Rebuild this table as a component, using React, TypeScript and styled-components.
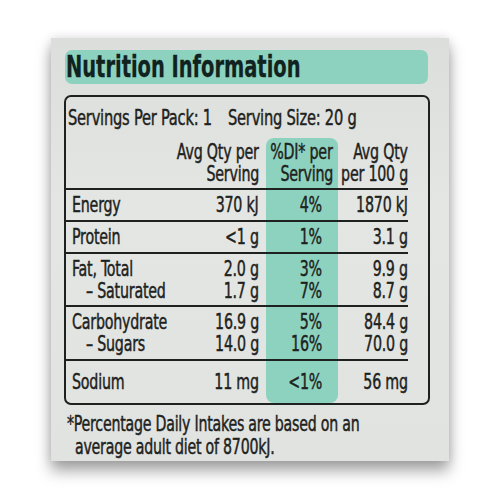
import React from "react";
import styled, { createGlobalStyle } from "styled-components";

const Global = createGlobalStyle`
  html, body { margin: 0; padding: 0; background: #ffffff; }
  body { width: 500px; height: 500px; overflow: hidden; }
`;

const FONT = `"DejaVu Sans Condensed", "Liberation Sans", sans-serif`;
const INK = "#1d2220";
const TEAL = "#8dd2bf";

const Page = styled.div`
  padding: 38px 0 0 51px;
`;

const Card = styled.div`
  width: 398px;
  height: 423px;
  box-sizing: border-box;
  padding: 12px 19px 0 13px;
  background: linear-gradient(180deg, #dcdedb 0%, #e4e6e3 40%, #e1e3e0 100%);
  box-shadow: 0 10px 14px rgba(0, 0, 0, 0.35), 0 0 10px rgba(0, 0, 0, 0.12);
  display: flex;
  flex-direction: column;
  font-family: ${FONT};
  color: ${INK};
  -webkit-text-stroke: 0.45px ${INK};
`;

/* condensed text: the label's face is a narrow DIN-like type */
const T = styled.span<{ $o?: "left" | "right"; $k?: number }>`
  display: inline-block;
  white-space: nowrap;
  transform: scaleX(${(p) => p.$k ?? 0.72});
  transform-origin: ${(p) => p.$o ?? "left"} center;
`;

const TitleBar = styled.div`
  height: 34px;
  margin: 0 2px 11px 1px;
  background: ${TEAL};
  border-radius: 7px;
  display: flex;
  align-items: center;
  padding-left: 1px;
`;

const Title = styled.h1`
  margin: 0;
  font-size: 30px;
  font-weight: 700;
  color: #10231e;
  -webkit-text-stroke: 0.3px #10231e;
  line-height: 1;
`;

const TableBox = styled.div`
  border: 2px solid ${INK};
  border-radius: 7px;
  padding-right: 20px;
  display: flex;
  flex-direction: column;
`;

const ServingLine = styled.div`
  height: 41px;
  display: grid;
  grid-template-columns: 160px 1fr;
  align-items: center;
  padding-left: 2px;
  font-size: 22px;
  letter-spacing: -0.3px;
`;

const Row = styled.div<{ $top?: boolean }>`
  display: grid;
  grid-template-columns: minmax(0, 1fr) 91px 72px 70px;
  border-top: ${(p) => (p.$top ? `2px solid ${INK}` : "none")};
  font-size: 22px;
  letter-spacing: -0.3px;
  line-height: 22px;
`;

const Cell = styled.div<{ $h: number }>`
  height: ${(p) => p.$h}px;
  min-width: 0;
  display: flex;
  flex-direction: column;
  justify-content: center;
`;

const Label = styled(Cell)`
  padding-left: 6px;
  align-items: flex-start;
`;

const Num = styled(Cell)<{ $pr?: number }>`
  align-items: flex-end;
  padding-right: ${(p) => p.$pr ?? 0}px;
`;

const DiCell = styled(Num)<{ $round?: "top" | "bottom" }>`
  background: ${TEAL};
  border-radius: ${(p) =>
    p.$round === "top" ? "8px 8px 0 0" : p.$round === "bottom" ? "0 0 8px 8px" : "0"};
`;

const RightLine = styled.div`
  display: flex;
  justify-content: flex-end;
`;

const Sub = styled.div`
  padding-left: 14px;
`;

const Footer = styled.div`
  margin: 8px 0 0 3px;
  font-size: 21px;
  letter-spacing: -0.3px;
  line-height: 23px;
`;

const FootLine = styled.div<{ $indent?: number }>`
  padding-left: ${(p) => p.$indent ?? 0}px;
`;

type R = { label: string[]; a: string[]; b: string[]; c: string[]; h: number };

const rows: R[] = [
  { label: ["Energy"], a: ["370 kJ"], b: ["4%"], c: ["1870 kJ"], h: 30 },
  { label: ["Protein"], a: ["<1 g"], b: ["1%"], c: ["3.1 g"], h: 30 },
  {
    label: ["Fat, Total", "– Saturated"],
    a: ["2.0 g", "1.7 g"],
    b: ["3%", "7%"],
    c: ["9.9 g", "8.7 g"],
    h: 51,
  },
  {
    label: ["Carbohydrate", "– Sugars"],
    a: ["16.9 g", "14.0 g"],
    b: ["5%", "16%"],
    c: ["84.4 g", "70.0 g"],
    h: 52,
  },
  { label: ["Sodium"], a: ["11 mg"], b: ["<1%"], c: ["56 mg"], h: 42 },
];

const right = (xs: string[]) =>
  xs.map((x, i) => (
    <RightLine key={i}>
      <T $o="right">{x}</T>
    </RightLine>
  ));

const labels = (xs: string[]) =>
  xs.map((x, i) =>
    i === 0 ? (
      <div key={i}>
        <T>{x}</T>
      </div>
    ) : (
      <Sub key={i}>
        <T>{x}</T>
      </Sub>
    )
  );

export default function App() {
  return (
    <>
      <Global />
      <Page>
        <Card>
          <TitleBar>
            <Title>
              <T $k={0.72}>Nutrition Information</T>
            </Title>
          </TitleBar>
          <TableBox>
            <ServingLine>
              <T $k={0.74}>Servings Per Pack: 1</T>
              <T $k={0.74}>Serving Size: 20 g</T>
            </ServingLine>
            <Row>
              <Label $h={50} />
              <Num $h={50} $pr={7}>
                {right(["Avg Qty per", "Serving"])}
              </Num>
              <DiCell $h={50} $pr={5} $round="top">
                {right(["%DI* per", "Serving"])}
              </DiCell>
              <Num $h={50}>{right(["Avg Qty", "per 100 g"])}</Num>
            </Row>
            {rows.map((r, i) => (
              <Row key={i} $top>
                <Label $h={r.h}>{labels(r.label)}</Label>
                <Num $h={r.h} $pr={7}>
                  {right(r.a)}
                </Num>
                <DiCell $h={r.h} $pr={16} $round={i === rows.length - 1 ? "bottom" : undefined}>
                  {right(r.b)}
                </DiCell>
                <Num $h={r.h}>{right(r.c)}</Num>
              </Row>
            ))}
          </TableBox>
          <Footer>
            <FootLine>
              <T $k={0.75}>*Percentage Daily Intakes are based on an</T>
            </FootLine>
            <FootLine $indent={8}>
              <T $k={0.75}>average adult diet of 8700kJ.</T>
            </FootLine>
          </Footer>
        </Card>
      </Page>
    </>
  );
}
